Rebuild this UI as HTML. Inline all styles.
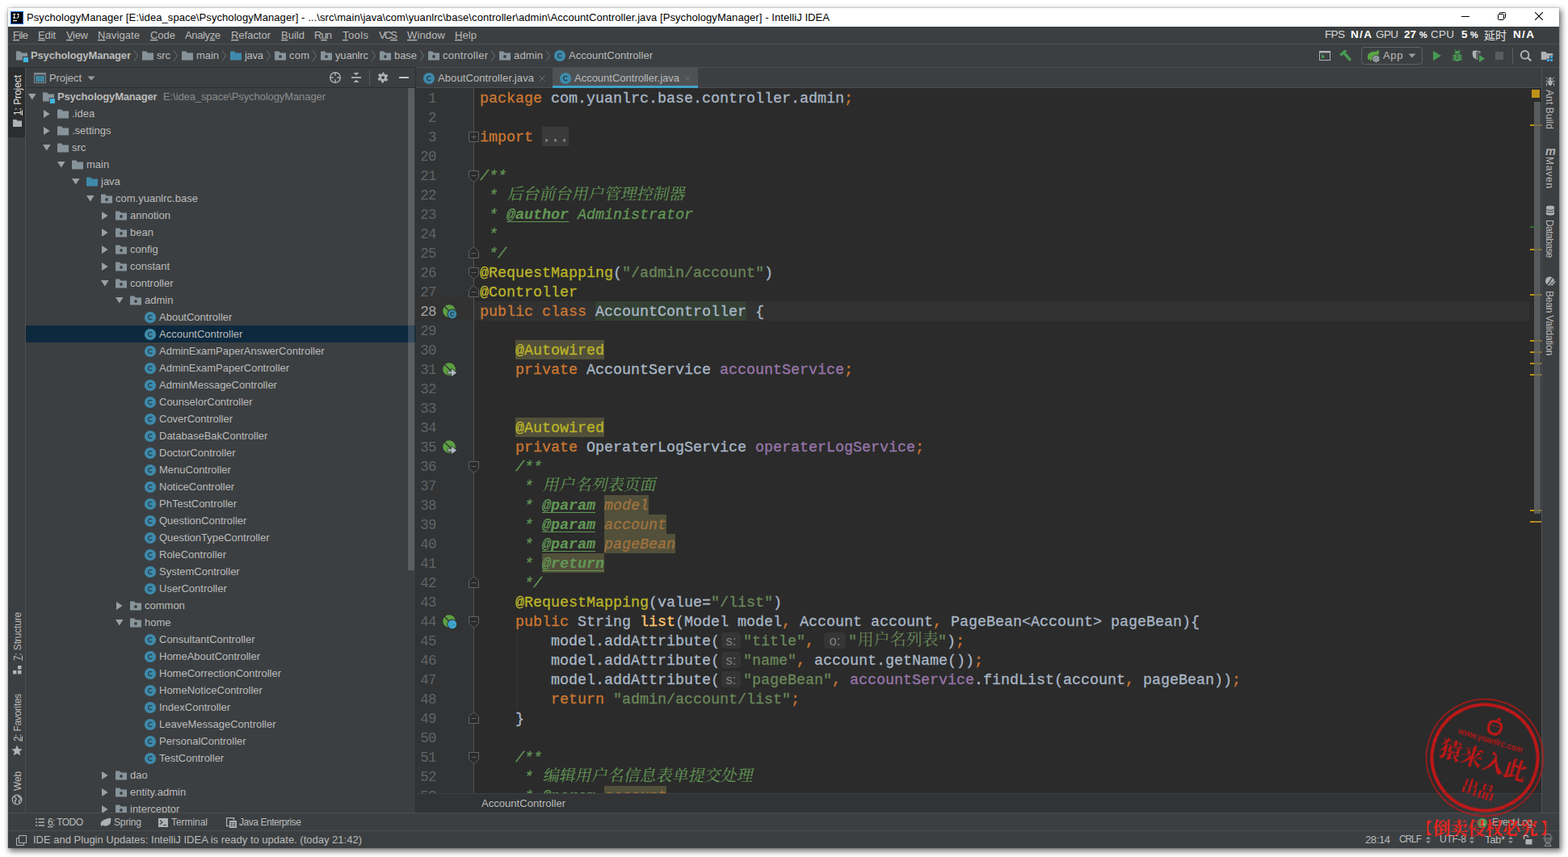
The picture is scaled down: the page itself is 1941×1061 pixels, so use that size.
<!DOCTYPE html>
<html><head><meta charset="utf-8"><title>PsychologyManager - IntelliJ IDEA</title>
<style>
html,body{margin:0;padding:0;}
body{width:1941px;height:1061px;background:#fff;position:relative;overflow:hidden;font-family:"Liberation Sans",sans-serif;}
.r{position:absolute;display:block;}
.t{position:absolute;white-space:pre;font-family:"Liberation Sans",sans-serif;}
.t u{text-decoration:underline;text-underline-offset:1px;text-decoration-skip-ink:none;}
.c{position:absolute;white-space:pre;font-family:"Liberation Mono",monospace;font-size:18.33px;line-height:28px;height:24px;color:#a9b7c6;-webkit-text-stroke:0.3px;}
.c span{display:inline-block;height:24px;line-height:28px;vertical-align:top;}
.ln{position:absolute;font-family:"Liberation Mono",monospace;font-size:17.500px;letter-spacing:-0.6px;line-height:24px;height:24px;color:#606366;text-align:right;}
.k{color:#cc7832}.s{color:#6a8759}.a{color:#bbb529}.f{color:#9876aa}.m{color:#ffc66d}
.d{color:#629755;font-style:italic}.dt{color:#629755;font-style:italic;font-weight:bold;text-decoration:underline;text-decoration-skip-ink:none;text-underline-offset:2.5px;text-decoration-thickness:1.2px;-webkit-text-stroke:0.1px}
.dp{color:#a0733f;font-style:italic;background:#52503a}
.hl{background:#344134}.ab{background:#52503a}
.c span.h{font-family:"Liberation Sans",sans-serif;font-size:16.500px;color:#7f7f7f;background:#353535;border-radius:4px;height:20px;line-height:21px;vertical-align:top;margin-top:2px;text-align:center;-webkit-text-stroke:0;}
</style></head><body>

<div class="r" style="left:10px;top:10px;width:1920px;height:1040px;background:#3c3f41;box-shadow:0 0 0 1px rgba(0,0,0,.08),2px 3px 7px 1px rgba(0,0,0,.55);"></div>
<div class="r" style="left:10px;top:10px;width:1920px;height:23px;background:#ffffff;"></div>
<svg class="r" style="left:13px;top:14px;" width="16" height="16" viewBox="0 0 16 16"><rect width="16" height="16" fill="#0a67d6"/><rect x="1" y="1" width="14" height="14" fill="#000"/><path d="M3 3.5h3.4M4.7 3.5v4.6M3 8.1h3.4M8 3.5h2.6M9.8 3.5v3.3q0 1.4-1.5 1.4h-.8" stroke="#fff" stroke-width="1.1" fill="none"/><rect x="3" y="11" width="5" height="1.2" fill="#fff"/></svg>
<svg class="r" style="left:33.3px;top:12px;overflow:visible" width="994" height="20"><text x="0" y="14.00" font-family="Liberation Sans, sans-serif" font-size="13" fill="#000000" textLength="994" lengthAdjust="spacing" xml:space="preserve">PsychologyManager [E:\idea_space\PsychologyManager] - ...\src\main\java\com\yuanlrc\base\controller\admin\AccountController.java [PsychologyManager] - IntelliJ IDEA</text></svg>
<svg class="r" style="left:1809px;top:15px;" width="10" height="10" viewBox="0 0 10 10"><path d="M0 5.500h10" stroke="#000" stroke-width="1"/></svg>
<svg class="r" style="left:1854px;top:15px;" width="10" height="10" viewBox="0 0 10 10"><rect x="0.500" y="2.500" width="7" height="7" rx="1" fill="none" stroke="#000"/><path d="M2.500 2.500v-1q0-1 1-1h5q1 0 1 1v5q0 1-1 1h-1" stroke="#000" fill="none"/></svg>
<svg class="r" style="left:1900px;top:15px;" width="10" height="10" viewBox="0 0 10 10"><path d="M0 0l10 10M10 0L0 10" stroke="#000" stroke-width="1.100"/></svg>
<div class="r" style="left:10px;top:54px;width:1920px;height:1px;background:#515151;"></div>
<svg class="r" style="left:16px;top:33px;overflow:visible" width="19" height="20"><text x="0" y="15.00" font-family="Liberation Sans, sans-serif" font-size="13" fill="#bbbbbb" textLength="19" lengthAdjust="spacing" xml:space="preserve"><tspan text-decoration="underline">F</tspan>ile</text></svg>
<svg class="r" style="left:47px;top:33px;overflow:visible" width="22" height="20"><text x="0" y="15.00" font-family="Liberation Sans, sans-serif" font-size="13" fill="#bbbbbb" textLength="22" lengthAdjust="spacing" xml:space="preserve"><tspan text-decoration="underline">E</tspan>dit</text></svg>
<svg class="r" style="left:82px;top:33px;overflow:visible" width="27" height="20"><text x="0" y="15.00" font-family="Liberation Sans, sans-serif" font-size="13" fill="#bbbbbb" textLength="27" lengthAdjust="spacing" xml:space="preserve"><tspan text-decoration="underline">V</tspan>iew</text></svg>
<svg class="r" style="left:121px;top:33px;overflow:visible" width="52" height="20"><text x="0" y="15.00" font-family="Liberation Sans, sans-serif" font-size="13" fill="#bbbbbb" textLength="52" lengthAdjust="spacing" xml:space="preserve"><tspan text-decoration="underline">N</tspan>avigate</text></svg>
<svg class="r" style="left:186px;top:33px;overflow:visible" width="31" height="20"><text x="0" y="15.00" font-family="Liberation Sans, sans-serif" font-size="13" fill="#bbbbbb" textLength="31" lengthAdjust="spacing" xml:space="preserve"><tspan text-decoration="underline">C</tspan>ode</text></svg>
<svg class="r" style="left:229px;top:33px;overflow:visible" width="44" height="20"><text x="0" y="15.00" font-family="Liberation Sans, sans-serif" font-size="13" fill="#bbbbbb" textLength="44" lengthAdjust="spacing" xml:space="preserve">Analy<tspan text-decoration="underline">z</tspan>e</text></svg>
<svg class="r" style="left:286px;top:33px;overflow:visible" width="49" height="20"><text x="0" y="15.00" font-family="Liberation Sans, sans-serif" font-size="13" fill="#bbbbbb" textLength="49" lengthAdjust="spacing" xml:space="preserve"><tspan text-decoration="underline">R</tspan>efactor</text></svg>
<svg class="r" style="left:347.5px;top:33px;overflow:visible" width="29" height="20"><text x="0" y="15.00" font-family="Liberation Sans, sans-serif" font-size="13" fill="#bbbbbb" textLength="29" lengthAdjust="spacing" xml:space="preserve"><tspan text-decoration="underline">B</tspan>uild</text></svg>
<svg class="r" style="left:388.5px;top:33px;overflow:visible" width="22" height="20"><text x="0" y="15.00" font-family="Liberation Sans, sans-serif" font-size="13" fill="#bbbbbb" textLength="22" lengthAdjust="spacing" xml:space="preserve">R<tspan text-decoration="underline">u</tspan>n</text></svg>
<svg class="r" style="left:423.5px;top:33px;overflow:visible" width="32" height="20"><text x="0" y="15.00" font-family="Liberation Sans, sans-serif" font-size="13" fill="#bbbbbb" textLength="32" lengthAdjust="spacing" xml:space="preserve"><tspan text-decoration="underline">T</tspan>ools</text></svg>
<svg class="r" style="left:468.5px;top:33px;overflow:visible" width="23" height="20"><text x="0" y="15.00" font-family="Liberation Sans, sans-serif" font-size="13" fill="#bbbbbb" textLength="23" lengthAdjust="spacing" xml:space="preserve">VC<tspan text-decoration="underline">S</tspan></text></svg>
<svg class="r" style="left:503.5px;top:33px;overflow:visible" width="47" height="20"><text x="0" y="15.00" font-family="Liberation Sans, sans-serif" font-size="13" fill="#bbbbbb" textLength="47" lengthAdjust="spacing" xml:space="preserve"><tspan text-decoration="underline">W</tspan>indow</text></svg>
<svg class="r" style="left:562.5px;top:33px;overflow:visible" width="27" height="20"><text x="0" y="15.00" font-family="Liberation Sans, sans-serif" font-size="13" fill="#bbbbbb" textLength="27" lengthAdjust="spacing" xml:space="preserve"><tspan text-decoration="underline">H</tspan>elp</text></svg>
<svg class="r" style="left:1640px;top:33px;overflow:visible" width="25" height="20"><text x="0" y="14.00" font-family="Liberation Sans, sans-serif" font-size="13.5" fill="#d8d8d8" textLength="25" lengthAdjust="spacing" xml:space="preserve">FPS</text></svg>
<svg class="r" style="left:1672px;top:33px;overflow:visible" width="26" height="20"><text x="0" y="14.00" font-family="Liberation Sans, sans-serif" font-size="13.5" font-weight="bold" fill="#ffffff" textLength="26" lengthAdjust="spacing" xml:space="preserve">N/A</text></svg>
<svg class="r" style="left:1703px;top:33px;overflow:visible" width="28" height="20"><text x="0" y="14.00" font-family="Liberation Sans, sans-serif" font-size="13.5" fill="#d8d8d8" textLength="28" lengthAdjust="spacing" xml:space="preserve">GPU</text></svg>
<svg class="r" style="left:1738px;top:33px;overflow:visible" width="15" height="20"><text x="0" y="14.00" font-family="Liberation Sans, sans-serif" font-size="13.5" font-weight="bold" fill="#ffffff" textLength="15" lengthAdjust="spacing" xml:space="preserve">27</text></svg>
<svg class="r" style="left:1757px;top:35px;overflow:visible" width="10" height="16"><text x="0" y="12.00" font-family="Liberation Sans, sans-serif" font-size="11" font-weight="bold" fill="#ffffff" textLength="10" lengthAdjust="spacing" xml:space="preserve">%</text></svg>
<svg class="r" style="left:1771px;top:33px;overflow:visible" width="29" height="20"><text x="0" y="14.00" font-family="Liberation Sans, sans-serif" font-size="13.5" fill="#d8d8d8" textLength="29" lengthAdjust="spacing" xml:space="preserve">CPU</text></svg>
<svg class="r" style="left:1809px;top:33px;overflow:visible" width="8" height="20"><text x="0" y="14.00" font-family="Liberation Sans, sans-serif" font-size="13.5" font-weight="bold" fill="#ffffff" textLength="8" lengthAdjust="spacing" xml:space="preserve">5</text></svg>
<svg class="r" style="left:1820px;top:35px;overflow:visible" width="10" height="16"><text x="0" y="12.00" font-family="Liberation Sans, sans-serif" font-size="11" font-weight="bold" fill="#ffffff" textLength="10" lengthAdjust="spacing" xml:space="preserve">%</text></svg>
<svg class="r" style="left:1837px;top:36px;fill:#e6e6e6;overflow:visible" width="30" height="16" viewBox="0 0 30 16"><text x="0" y="12.5" font-family="Liberation Sans, Noto Sans CJK SC, sans-serif" font-size="14" fill="#e6e6e6">延时</text></svg>
<svg class="r" style="left:1873px;top:33px;overflow:visible" width="26" height="20"><text x="0" y="14.00" font-family="Liberation Sans, sans-serif" font-size="13.5" font-weight="bold" fill="#ffffff" textLength="26" lengthAdjust="spacing" xml:space="preserve">N/A</text></svg>
<div class="r" style="left:10px;top:83px;width:505px;height:1px;background:#2d2f30;"></div>
<div class="r" style="left:515px;top:83px;width:1415px;height:1px;background:#4d4d4d;"></div>
<svg class="r" style="left:19px;top:60.5px;" width="16" height="16" viewBox="0 0 16 16"><path d="M1 2.5h5.2l1.600 2H15v4.500H8.800v4.500H1z" fill="#87939a"/><rect x="9.800" y="10" width="6.200" height="6" fill="#40b6e0"/></svg>
<svg class="r" style="left:38px;top:58px;overflow:visible" width="124" height="20"><text x="0" y="15.00" font-family="Liberation Sans, sans-serif" font-size="13" font-weight="bold" fill="#bbbbbb" textLength="124" lengthAdjust="spacing" xml:space="preserve">PsychologyManager</text></svg>
<svg class="r" style="left:175px;top:60.5px;" width="16" height="16" viewBox="0 0 16 16"><path d="M1 2.5h5.2l1.6 2H15v9H1z" fill="#87939a"/></svg>
<svg class="r" style="left:194px;top:58px;overflow:visible" width="17" height="20"><text x="0" y="15.00" font-family="Liberation Sans, sans-serif" font-size="13" fill="#bbbbbb" textLength="17" lengthAdjust="spacing" xml:space="preserve">src</text></svg>
<svg class="r" style="left:224px;top:60.5px;" width="16" height="16" viewBox="0 0 16 16"><path d="M1 2.5h5.2l1.6 2H15v9H1z" fill="#87939a"/></svg>
<svg class="r" style="left:243px;top:58px;overflow:visible" width="28" height="20"><text x="0" y="15.00" font-family="Liberation Sans, sans-serif" font-size="13" fill="#bbbbbb" textLength="28" lengthAdjust="spacing" xml:space="preserve">main</text></svg>
<svg class="r" style="left:284px;top:60.5px;" width="16" height="16" viewBox="0 0 16 16"><path d="M1 2.5h5.2l1.6 2H15v9H1z" fill="#3e8aab"/></svg>
<svg class="r" style="left:303px;top:58px;overflow:visible" width="23" height="20"><text x="0" y="15.00" font-family="Liberation Sans, sans-serif" font-size="13" fill="#bbbbbb" textLength="23" lengthAdjust="spacing" xml:space="preserve">java</text></svg>
<svg class="r" style="left:339px;top:60.5px;" width="16" height="16" viewBox="0 0 16 16"><path d="M1 2.5h5.2l1.6 2H15v9H1z" fill="#87939a"/><circle cx="8" cy="9" r="1.9" fill="#3c3f41"/></svg>
<svg class="r" style="left:358px;top:58px;overflow:visible" width="25" height="20"><text x="0" y="15.00" font-family="Liberation Sans, sans-serif" font-size="13" fill="#bbbbbb" textLength="25" lengthAdjust="spacing" xml:space="preserve">com</text></svg>
<svg class="r" style="left:396px;top:60.5px;" width="16" height="16" viewBox="0 0 16 16"><path d="M1 2.5h5.2l1.6 2H15v9H1z" fill="#87939a"/><circle cx="8" cy="9" r="1.9" fill="#3c3f41"/></svg>
<svg class="r" style="left:415px;top:58px;overflow:visible" width="41" height="20"><text x="0" y="15.00" font-family="Liberation Sans, sans-serif" font-size="13" fill="#bbbbbb" textLength="41" lengthAdjust="spacing" xml:space="preserve">yuanlrc</text></svg>
<svg class="r" style="left:469px;top:60.5px;" width="16" height="16" viewBox="0 0 16 16"><path d="M1 2.5h5.2l1.6 2H15v9H1z" fill="#87939a"/><circle cx="8" cy="9" r="1.9" fill="#3c3f41"/></svg>
<svg class="r" style="left:488px;top:58px;overflow:visible" width="28" height="20"><text x="0" y="15.00" font-family="Liberation Sans, sans-serif" font-size="13" fill="#bbbbbb" textLength="28" lengthAdjust="spacing" xml:space="preserve">base</text></svg>
<svg class="r" style="left:529px;top:60.5px;" width="16" height="16" viewBox="0 0 16 16"><path d="M1 2.5h5.2l1.6 2H15v9H1z" fill="#87939a"/><circle cx="8" cy="9" r="1.9" fill="#3c3f41"/></svg>
<svg class="r" style="left:548px;top:58px;overflow:visible" width="56" height="20"><text x="0" y="15.00" font-family="Liberation Sans, sans-serif" font-size="13" fill="#bbbbbb" textLength="56" lengthAdjust="spacing" xml:space="preserve">controller</text></svg>
<svg class="r" style="left:617px;top:60.5px;" width="16" height="16" viewBox="0 0 16 16"><path d="M1 2.5h5.2l1.6 2H15v9H1z" fill="#87939a"/><circle cx="8" cy="9" r="1.9" fill="#3c3f41"/></svg>
<svg class="r" style="left:636px;top:58px;overflow:visible" width="36" height="20"><text x="0" y="15.00" font-family="Liberation Sans, sans-serif" font-size="13" fill="#bbbbbb" textLength="36" lengthAdjust="spacing" xml:space="preserve">admin</text></svg>
<svg class="r" style="left:685px;top:60.5px;" width="16" height="16" viewBox="0 0 16 16"><circle cx="8" cy="8" r="7.100" fill="#3e8aab"/><path d="M10.200 9.700a2.600 2.600 0 1 1 0-3.400" fill="none" stroke="#25424f" stroke-width="1.400"/></svg>
<svg class="r" style="left:704px;top:58px;overflow:visible" width="104" height="20"><text x="0" y="15.00" font-family="Liberation Sans, sans-serif" font-size="13" fill="#bbbbbb" textLength="104" lengthAdjust="spacing" xml:space="preserve">AccountController</text></svg>
<svg class="r" style="left:165px;top:61px;" width="7" height="16" viewBox="0 0 7 16"><path d="M1 1.5l4.5 6.5L1 14.5" stroke="#6e7173" stroke-width="1" fill="none"/></svg>
<svg class="r" style="left:214px;top:61px;" width="7" height="16" viewBox="0 0 7 16"><path d="M1 1.5l4.5 6.5L1 14.5" stroke="#6e7173" stroke-width="1" fill="none"/></svg>
<svg class="r" style="left:274px;top:61px;" width="7" height="16" viewBox="0 0 7 16"><path d="M1 1.5l4.5 6.5L1 14.5" stroke="#6e7173" stroke-width="1" fill="none"/></svg>
<svg class="r" style="left:329px;top:61px;" width="7" height="16" viewBox="0 0 7 16"><path d="M1 1.5l4.5 6.5L1 14.5" stroke="#6e7173" stroke-width="1" fill="none"/></svg>
<svg class="r" style="left:386px;top:61px;" width="7" height="16" viewBox="0 0 7 16"><path d="M1 1.5l4.5 6.5L1 14.5" stroke="#6e7173" stroke-width="1" fill="none"/></svg>
<svg class="r" style="left:459px;top:61px;" width="7" height="16" viewBox="0 0 7 16"><path d="M1 1.5l4.5 6.5L1 14.5" stroke="#6e7173" stroke-width="1" fill="none"/></svg>
<svg class="r" style="left:519px;top:61px;" width="7" height="16" viewBox="0 0 7 16"><path d="M1 1.5l4.5 6.5L1 14.5" stroke="#6e7173" stroke-width="1" fill="none"/></svg>
<svg class="r" style="left:607px;top:61px;" width="7" height="16" viewBox="0 0 7 16"><path d="M1 1.5l4.5 6.5L1 14.5" stroke="#6e7173" stroke-width="1" fill="none"/></svg>
<svg class="r" style="left:675px;top:61px;" width="7" height="16" viewBox="0 0 7 16"><path d="M1 1.5l4.5 6.5L1 14.5" stroke="#6e7173" stroke-width="1" fill="none"/></svg>
<svg class="r" style="left:1633px;top:63px;" width="14" height="12" viewBox="0 0 14 12"><rect x="0.500" y="0.500" width="13" height="11" fill="none" stroke="#afb1b3" stroke-width="1"/><rect x="0" y="0" width="14" height="2.400" fill="#afb1b3"/><path d="M3 4.100l4.200 2.800L3 9.700z" fill="#499c54"/></svg>
<svg class="r" style="left:1657px;top:61px;" width="17" height="16" viewBox="0 0 17 16"><path d="M1 6.400L6.800 1l3 .3.200 1.100L3.800 8.400z" fill="#499c54"/><path d="M5.600 5.700l3-1.700L16 12.400l-2.500 2.500z" fill="#499c54"/></svg>
<div class="r" style="left:1685px;top:58px;width:74px;height:20px;border:1px solid #5f6264;border-radius:4px;"></div>
<svg class="r" style="left:1692px;top:61px;" width="18" height="18" viewBox="0 0 18 18"><path d="M14.900 .8C15.600 6 14 11 9 12.300 5.500 13.200 3 12.500 2 13.200 0 10 .5 5.500 5 3.800 8.500 2.500 12.500 3.300 14.900 .8z" fill="#5aa545"/><circle cx="4.800" cy="13.700" r=".9" fill="#5aa545"/><path d="M11.400 6.600l4.600 2.650v5.300l-4.600 2.650-4.600-2.650v-5.300z" fill="#3c3f41"/><path d="M11.400 7.500l3.900 2.200v4.400l-3.900 2.200-3.900-2.200V9.700z" fill="#b0bac3"/><path d="M11.400 9v2.900" stroke="#474b4f" stroke-width=".9"/><path d="M10 9.900a2.300 2.300 0 1 0 2.800 0" stroke="#474b4f" stroke-width=".9" fill="none"/></svg>
<svg class="r" style="left:1712px;top:58px;overflow:visible" width="24.5" height="20"><text x="0" y="15.00" font-family="Liberation Sans, sans-serif" font-size="13" fill="#bbbbbb" textLength="24.5" lengthAdjust="spacing" xml:space="preserve">App</text></svg>
<svg class="r" style="left:1743px;top:66px;" width="10" height="6" viewBox="0 0 10 6"><path d="M0.500 0.500h9L5 5.500z" fill="#9a9da0"/></svg>
<svg class="r" style="left:1773px;top:62px;" width="12" height="14" viewBox="0 0 12 14"><path d="M1 1l10 6L1 13z" fill="#499c54"/></svg>
<svg class="r" style="left:1797px;top:61px;" width="14" height="16" viewBox="0 0 14 16"><path d="M3.300 .9l.9-.7 1.700 2.100q1.100-.5 2.200 0L9.800.2l.9.700-1.600 2.100q1.300.9 1.500 2.300H3.400q.2-1.400 1.500-2.300zM3.200 6.300h7.600v1.300H13v1.300h-2.200v1.300H13v1.300h-2.200v.6l2.200.9-.5 1.200-2.100-.9Q9.500 15 7 15t-3.400-1.700l-2.100.9-.5-1.200 2.200-.9v-.6H1v-1.300h2.200V8.900H1V7.600h2.200z" fill="#499c54"/><path d="M5 8.300h4M5 11.100h4" stroke="#3c3f41" stroke-width="1.100"/></svg>
<svg class="r" style="left:1822px;top:62px;" width="17" height="16" viewBox="0 0 17 16"><path d="M.7 1.700Q3.500 .3 5.800 .7l4.700 1v2.600H7.300v8.200Q5 11 2 9.500 .5 6 .7 1.700z" fill="#afb1b3"/><path d="M5.400 2.300h2.400l2 .6v.9H6.600v7.900l-1.200-.6z" fill="#3c3f41"/><path d="M9 6.100l7.200 4.500L9 15.100z" fill="#499c54" stroke="#3c3f41" stroke-width=".8" paint-order="stroke"/></svg>
<div class="r" style="left:1851px;top:64px;width:10px;height:10px;background:#5a5c5e;"></div>
<div class="r" style="left:1872px;top:59px;width:1px;height:20px;background:#5a5d5f;"></div>
<svg class="r" style="left:1880px;top:60px;" width="18" height="18" viewBox="0 0 18 18"><circle cx="7.600" cy="7.900" r="4.800" fill="none" stroke="#afb1b3" stroke-width="2"/><path d="M11 11.400l4.400 3.900" stroke="#afb1b3" stroke-width="2.300"/></svg>
<svg class="r" style="left:1907px;top:63px;" width="16" height="14" viewBox="0 0 16 14"><path d="M.8 .9h5.800l1.300 2h7.300v4.200H11v4H.8z" fill="#afb1b3"/><rect x="11.500" y="5.700" width="4" height="4" fill="#3c3f41"/><rect x="7.400" y="9.600" width="8.100" height="4.100" fill="#3c3f41"/><rect x="12" y="6.200" width="3" height="2.800" fill="#3ca5e0"/><rect x="7.900" y="10.100" width="3.100" height="2.900" fill="#3ca5e0"/><rect x="12" y="10.100" width="3" height="2.900" fill="#3ca5e0"/></svg>
<div class="r" style="left:10px;top:84px;width:21px;height:923px;background:#3c3f41;"></div>
<div class="r" style="left:31px;top:84px;width:1px;height:923px;background:#4d4f51;"></div>
<div class="r" style="left:10px;top:84px;width:21px;height:86px;background:#2b2d2e;"></div>
<span class="t" style="left:13.5px;top:143px;font-size:12px;line-height:16px;height:16px;color:#e4e4e4;letter-spacing:-0.069px;transform-origin:0 0;transform:rotate(-90deg);"><u>1</u>: Project</span>
<svg class="r" style="left:16px;top:148px;" width="11" height="9" viewBox="0 0 11 9"><path d="M0 0h4.300l1.300 1.600H11V9H0z" fill="#afb1b3"/></svg>
<span class="t" style="left:13.5px;top:818px;font-size:12px;line-height:16px;height:16px;color:#bbbbbb;letter-spacing:-0.169px;transform-origin:0 0;transform:rotate(-90deg);"><u>7</u>: Structure</span>
<svg class="r" style="left:16px;top:824px;" width="11" height="11" viewBox="0 0 11 11"><rect x="0" y="6" width="4.500" height="4.500" fill="#afb1b3"/><rect x="6" y="6" width="4.500" height="4.500" fill="#afb1b3"/><rect x="6" y="0" width="4.500" height="4.500" fill="#afb1b3"/></svg>
<span class="t" style="left:13.5px;top:918px;font-size:12px;line-height:16px;height:16px;color:#bbbbbb;letter-spacing:-0.307px;transform-origin:0 0;transform:rotate(-90deg);"><u>2</u>: Favorites</span>
<svg class="r" style="left:14px;top:922px;" width="14" height="14" viewBox="0 0 14 14"><path d="M7 0.500l2 4.500 4.700.4-3.600 3.100 1.100 4.700L7 10.700 2.800 13.200l1.100-4.700L0.300 5.400 5 5z" fill="#afb1b3"/></svg>
<span class="t" style="left:13.5px;top:979px;font-size:12px;line-height:16px;height:16px;color:#bbbbbb;letter-spacing:-0.152px;transform-origin:0 0;transform:rotate(-90deg);">Web</span>
<svg class="r" style="left:14px;top:983px;" width="14" height="14" viewBox="0 0 14 14"><circle cx="7" cy="7" r="5.800" fill="none" stroke="#afb1b3" stroke-width="1.300"/><path d="M3 3.500q2.500 0 3 2t-1.500 2.500q0 2 1 3.500M8.500 1.500q-.5 2 1.500 2.500t2.500 3q-2.500-.5-3 1.500t1 3" fill="none" stroke="#afb1b3" stroke-width="1.400"/></svg>
<div class="r" style="left:32px;top:108px;width:482px;height:1px;background:#2d2f30;"></div>
<div class="r" style="left:514px;top:83px;width:1px;height:924px;background:#2d2f30;"></div>
<svg class="r" style="left:42px;top:90px;" width="15" height="13" viewBox="0 0 15 13"><rect x="0.500" y="0.500" width="14" height="12" fill="none" stroke="#7f8b91" stroke-width="1"/><rect x="0" y="0" width="15" height="2.500" fill="#7f8b91"/><rect x="2" y="3.800" width="11" height="7.400" fill="#3e86a0"/></svg>
<svg class="r" style="left:61px;top:86px;overflow:visible" width="40" height="20"><text x="0" y="15.00" font-family="Liberation Sans, sans-serif" font-size="13" fill="#bbbbbb" textLength="40" lengthAdjust="spacing" xml:space="preserve">Project</text></svg>
<svg class="r" style="left:108px;top:94px;" width="10" height="6" viewBox="0 0 10 6"><path d="M0.500 0.500h9L5 5.500z" fill="#9a9da0"/></svg>
<svg class="r" style="left:407px;top:88px;" width="16" height="16" viewBox="0 0 16 16"><circle cx="8" cy="8" r="6.300" fill="none" stroke="#afb1b3" stroke-width="1.400"/><path d="M8 1.500v4.200M8 10.300v4.200M1.500 8h4.200M10.300 8h4.200" stroke="#afb1b3" stroke-width="1.400"/></svg>
<svg class="r" style="left:434px;top:88px;" width="14" height="16" viewBox="0 0 14 16"><path d="M1 8h12" stroke="#afb1b3" stroke-width="1.800"/><path d="M3.500 2h7L7 5.300zM3.500 14h7L7 10.700z" fill="#afb1b3"/></svg>
<div class="r" style="left:457px;top:86px;width:1px;height:20px;background:#555759;"></div>
<svg class="r" style="left:467px;top:89px;" width="14" height="14" viewBox="0 0 14 14"><circle cx="7" cy="7" r="3.400" fill="none" stroke="#afb1b3" stroke-width="2.800"/><circle cx="7" cy="7" r="5.300" fill="none" stroke="#afb1b3" stroke-width="2.400" stroke-dasharray="2.900 2.650" stroke-dashoffset="1.450" transform="rotate(-90 7 7)"/></svg>
<div class="r" style="left:494px;top:95px;width:12px;height:2px;background:#c4c5c6;"></div>
<div class="r" style="left:32px;top:109px;width:482px;height:897px;overflow:hidden;">
<svg class="r" style="left:2.5px;top:7px;" width="10" height="8" viewBox="0 0 10 8"><path d="M0 0h9.600L4.800 7.600z" fill="#9da0a2"/></svg>
<svg class="r" style="left:20px;top:2.5px;" width="16" height="16" viewBox="0 0 16 16"><path d="M1 2.5h5.2l1.600 2H15v4.500H8.800v4.500H1z" fill="#87939a"/><rect x="9.800" y="10" width="6.200" height="6" fill="#40b6e0"/></svg>
<svg class="r" style="left:39px;top:0px;overflow:visible" width="123.5" height="20"><text x="0" y="15.00" font-family="Liberation Sans, sans-serif" font-size="13" font-weight="bold" fill="#bbbbbb" textLength="123.5" lengthAdjust="spacing" xml:space="preserve">PsychologyManager</text></svg>
<svg class="r" style="left:170px;top:0px;overflow:visible" width="201" height="20"><text x="0" y="15.00" font-family="Liberation Sans, sans-serif" font-size="13" fill="#8c8c8c" textLength="201" lengthAdjust="spacing" xml:space="preserve">E:\idea_space\PsychologyManager</text></svg>
<svg class="r" style="left:22px;top:26.5px;" width="8" height="10" viewBox="0 0 8 10"><path d="M0 0L7.600 5 0 10z" fill="#9da0a2"/></svg>
<svg class="r" style="left:38px;top:23.5px;" width="16" height="16" viewBox="0 0 16 16"><path d="M1 2.5h5.2l1.6 2H15v9H1z" fill="#87939a"/></svg>
<span class="t" style="left:57px;top:22.5px;font-size:13px;line-height:18px;color:#bbbbbb;">.idea</span>
<svg class="r" style="left:22px;top:47.5px;" width="8" height="10" viewBox="0 0 8 10"><path d="M0 0L7.600 5 0 10z" fill="#9da0a2"/></svg>
<svg class="r" style="left:38px;top:44.5px;" width="16" height="16" viewBox="0 0 16 16"><path d="M1 2.5h5.2l1.6 2H15v9H1z" fill="#87939a"/></svg>
<span class="t" style="left:57px;top:43.5px;font-size:13px;line-height:18px;color:#bbbbbb;">.settings</span>
<svg class="r" style="left:20.5px;top:70px;" width="10" height="8" viewBox="0 0 10 8"><path d="M0 0h9.600L4.800 7.600z" fill="#9da0a2"/></svg>
<svg class="r" style="left:38px;top:65.5px;" width="16" height="16" viewBox="0 0 16 16"><path d="M1 2.5h5.2l1.6 2H15v9H1z" fill="#87939a"/></svg>
<span class="t" style="left:57px;top:64.5px;font-size:13px;line-height:18px;color:#bbbbbb;">src</span>
<svg class="r" style="left:38.5px;top:91px;" width="10" height="8" viewBox="0 0 10 8"><path d="M0 0h9.600L4.800 7.600z" fill="#9da0a2"/></svg>
<svg class="r" style="left:56px;top:86.5px;" width="16" height="16" viewBox="0 0 16 16"><path d="M1 2.5h5.2l1.6 2H15v9H1z" fill="#87939a"/></svg>
<span class="t" style="left:75px;top:85.5px;font-size:13px;line-height:18px;color:#bbbbbb;">main</span>
<svg class="r" style="left:56.5px;top:112px;" width="10" height="8" viewBox="0 0 10 8"><path d="M0 0h9.600L4.800 7.600z" fill="#9da0a2"/></svg>
<svg class="r" style="left:74px;top:107.5px;" width="16" height="16" viewBox="0 0 16 16"><path d="M1 2.5h5.2l1.6 2H15v9H1z" fill="#3e8aab"/></svg>
<span class="t" style="left:93px;top:106.5px;font-size:13px;line-height:18px;color:#bbbbbb;">java</span>
<svg class="r" style="left:74.5px;top:133px;" width="10" height="8" viewBox="0 0 10 8"><path d="M0 0h9.600L4.800 7.600z" fill="#9da0a2"/></svg>
<svg class="r" style="left:92px;top:128.5px;" width="16" height="16" viewBox="0 0 16 16"><path d="M1 2.5h5.2l1.6 2H15v9H1z" fill="#87939a"/><circle cx="8" cy="9" r="1.9" fill="#3c3f41"/></svg>
<span class="t" style="left:111px;top:127.5px;font-size:13px;line-height:18px;color:#bbbbbb;">com.yuanlrc.base</span>
<svg class="r" style="left:94px;top:152.5px;" width="8" height="10" viewBox="0 0 8 10"><path d="M0 0L7.600 5 0 10z" fill="#9da0a2"/></svg>
<svg class="r" style="left:110px;top:149.5px;" width="16" height="16" viewBox="0 0 16 16"><path d="M1 2.5h5.2l1.6 2H15v9H1z" fill="#87939a"/><circle cx="8" cy="9" r="1.9" fill="#3c3f41"/></svg>
<span class="t" style="left:129px;top:148.5px;font-size:13px;line-height:18px;color:#bbbbbb;">annotion</span>
<svg class="r" style="left:94px;top:173.5px;" width="8" height="10" viewBox="0 0 8 10"><path d="M0 0L7.600 5 0 10z" fill="#9da0a2"/></svg>
<svg class="r" style="left:110px;top:170.5px;" width="16" height="16" viewBox="0 0 16 16"><path d="M1 2.5h5.2l1.6 2H15v9H1z" fill="#87939a"/><circle cx="8" cy="9" r="1.9" fill="#3c3f41"/></svg>
<span class="t" style="left:129px;top:169.5px;font-size:13px;line-height:18px;color:#bbbbbb;">bean</span>
<svg class="r" style="left:94px;top:194.5px;" width="8" height="10" viewBox="0 0 8 10"><path d="M0 0L7.600 5 0 10z" fill="#9da0a2"/></svg>
<svg class="r" style="left:110px;top:191.5px;" width="16" height="16" viewBox="0 0 16 16"><path d="M1 2.5h5.2l1.6 2H15v9H1z" fill="#87939a"/><circle cx="8" cy="9" r="1.9" fill="#3c3f41"/></svg>
<span class="t" style="left:129px;top:190.5px;font-size:13px;line-height:18px;color:#bbbbbb;">config</span>
<svg class="r" style="left:94px;top:215.5px;" width="8" height="10" viewBox="0 0 8 10"><path d="M0 0L7.600 5 0 10z" fill="#9da0a2"/></svg>
<svg class="r" style="left:110px;top:212.5px;" width="16" height="16" viewBox="0 0 16 16"><path d="M1 2.5h5.2l1.6 2H15v9H1z" fill="#87939a"/><circle cx="8" cy="9" r="1.9" fill="#3c3f41"/></svg>
<span class="t" style="left:129px;top:211.5px;font-size:13px;line-height:18px;color:#bbbbbb;">constant</span>
<svg class="r" style="left:92.5px;top:238px;" width="10" height="8" viewBox="0 0 10 8"><path d="M0 0h9.600L4.800 7.600z" fill="#9da0a2"/></svg>
<svg class="r" style="left:110px;top:233.5px;" width="16" height="16" viewBox="0 0 16 16"><path d="M1 2.5h5.2l1.6 2H15v9H1z" fill="#87939a"/><circle cx="8" cy="9" r="1.9" fill="#3c3f41"/></svg>
<span class="t" style="left:129px;top:232.5px;font-size:13px;line-height:18px;color:#bbbbbb;">controller</span>
<svg class="r" style="left:110.5px;top:259px;" width="10" height="8" viewBox="0 0 10 8"><path d="M0 0h9.600L4.800 7.600z" fill="#9da0a2"/></svg>
<svg class="r" style="left:128px;top:254.5px;" width="16" height="16" viewBox="0 0 16 16"><path d="M1 2.5h5.2l1.6 2H15v9H1z" fill="#87939a"/><circle cx="8" cy="9" r="1.9" fill="#3c3f41"/></svg>
<span class="t" style="left:147px;top:253.5px;font-size:13px;line-height:18px;color:#bbbbbb;">admin</span>
<svg class="r" style="left:146px;top:275.5px;" width="16" height="16" viewBox="0 0 16 16"><circle cx="8" cy="8" r="7.100" fill="#3e8aab"/><path d="M10.200 9.700a2.600 2.600 0 1 1 0-3.400" fill="none" stroke="#25424f" stroke-width="1.400"/></svg>
<span class="t" style="left:165px;top:274.5px;font-size:13px;line-height:18px;color:#bbbbbb;">AboutController</span>
<div class="r" style="left:0;top:294px;width:482px;height:21px;background:#0d293e;"></div>
<svg class="r" style="left:146px;top:296.5px;" width="16" height="16" viewBox="0 0 16 16"><circle cx="8" cy="8" r="7.100" fill="#3e8aab"/><path d="M10.200 9.700a2.600 2.600 0 1 1 0-3.400" fill="none" stroke="#25424f" stroke-width="1.400"/></svg>
<span class="t" style="left:165px;top:295.5px;font-size:13px;line-height:18px;color:#bbbbbb;">AccountController</span>
<svg class="r" style="left:146px;top:317.5px;" width="16" height="16" viewBox="0 0 16 16"><circle cx="8" cy="8" r="7.100" fill="#3e8aab"/><path d="M10.200 9.700a2.600 2.600 0 1 1 0-3.400" fill="none" stroke="#25424f" stroke-width="1.400"/></svg>
<span class="t" style="left:165px;top:316.5px;font-size:13px;line-height:18px;color:#bbbbbb;">AdminExamPaperAnswerController</span>
<svg class="r" style="left:146px;top:338.5px;" width="16" height="16" viewBox="0 0 16 16"><circle cx="8" cy="8" r="7.100" fill="#3e8aab"/><path d="M10.200 9.700a2.600 2.600 0 1 1 0-3.400" fill="none" stroke="#25424f" stroke-width="1.400"/></svg>
<span class="t" style="left:165px;top:337.5px;font-size:13px;line-height:18px;color:#bbbbbb;">AdminExamPaperController</span>
<svg class="r" style="left:146px;top:359.5px;" width="16" height="16" viewBox="0 0 16 16"><circle cx="8" cy="8" r="7.100" fill="#3e8aab"/><path d="M10.200 9.700a2.600 2.600 0 1 1 0-3.400" fill="none" stroke="#25424f" stroke-width="1.400"/></svg>
<span class="t" style="left:165px;top:358.5px;font-size:13px;line-height:18px;color:#bbbbbb;">AdminMessageController</span>
<svg class="r" style="left:146px;top:380.5px;" width="16" height="16" viewBox="0 0 16 16"><circle cx="8" cy="8" r="7.100" fill="#3e8aab"/><path d="M10.200 9.700a2.600 2.600 0 1 1 0-3.400" fill="none" stroke="#25424f" stroke-width="1.400"/></svg>
<span class="t" style="left:165px;top:379.5px;font-size:13px;line-height:18px;color:#bbbbbb;">CounselorController</span>
<svg class="r" style="left:146px;top:401.5px;" width="16" height="16" viewBox="0 0 16 16"><circle cx="8" cy="8" r="7.100" fill="#3e8aab"/><path d="M10.200 9.700a2.600 2.600 0 1 1 0-3.400" fill="none" stroke="#25424f" stroke-width="1.400"/></svg>
<span class="t" style="left:165px;top:400.5px;font-size:13px;line-height:18px;color:#bbbbbb;">CoverController</span>
<svg class="r" style="left:146px;top:422.5px;" width="16" height="16" viewBox="0 0 16 16"><circle cx="8" cy="8" r="7.100" fill="#3e8aab"/><path d="M10.200 9.700a2.600 2.600 0 1 1 0-3.400" fill="none" stroke="#25424f" stroke-width="1.400"/></svg>
<span class="t" style="left:165px;top:421.5px;font-size:13px;line-height:18px;color:#bbbbbb;">DatabaseBakController</span>
<svg class="r" style="left:146px;top:443.5px;" width="16" height="16" viewBox="0 0 16 16"><circle cx="8" cy="8" r="7.100" fill="#3e8aab"/><path d="M10.200 9.700a2.600 2.600 0 1 1 0-3.400" fill="none" stroke="#25424f" stroke-width="1.400"/></svg>
<span class="t" style="left:165px;top:442.5px;font-size:13px;line-height:18px;color:#bbbbbb;">DoctorController</span>
<svg class="r" style="left:146px;top:464.5px;" width="16" height="16" viewBox="0 0 16 16"><circle cx="8" cy="8" r="7.100" fill="#3e8aab"/><path d="M10.200 9.700a2.600 2.600 0 1 1 0-3.400" fill="none" stroke="#25424f" stroke-width="1.400"/></svg>
<span class="t" style="left:165px;top:463.5px;font-size:13px;line-height:18px;color:#bbbbbb;">MenuController</span>
<svg class="r" style="left:146px;top:485.5px;" width="16" height="16" viewBox="0 0 16 16"><circle cx="8" cy="8" r="7.100" fill="#3e8aab"/><path d="M10.200 9.700a2.600 2.600 0 1 1 0-3.400" fill="none" stroke="#25424f" stroke-width="1.400"/></svg>
<span class="t" style="left:165px;top:484.5px;font-size:13px;line-height:18px;color:#bbbbbb;">NoticeController</span>
<svg class="r" style="left:146px;top:506.5px;" width="16" height="16" viewBox="0 0 16 16"><circle cx="8" cy="8" r="7.100" fill="#3e8aab"/><path d="M10.200 9.700a2.600 2.600 0 1 1 0-3.400" fill="none" stroke="#25424f" stroke-width="1.400"/></svg>
<span class="t" style="left:165px;top:505.5px;font-size:13px;line-height:18px;color:#bbbbbb;">PhTestController</span>
<svg class="r" style="left:146px;top:527.5px;" width="16" height="16" viewBox="0 0 16 16"><circle cx="8" cy="8" r="7.100" fill="#3e8aab"/><path d="M10.200 9.700a2.600 2.600 0 1 1 0-3.400" fill="none" stroke="#25424f" stroke-width="1.400"/></svg>
<span class="t" style="left:165px;top:526.5px;font-size:13px;line-height:18px;color:#bbbbbb;">QuestionController</span>
<svg class="r" style="left:146px;top:548.5px;" width="16" height="16" viewBox="0 0 16 16"><circle cx="8" cy="8" r="7.100" fill="#3e8aab"/><path d="M10.200 9.700a2.600 2.600 0 1 1 0-3.400" fill="none" stroke="#25424f" stroke-width="1.400"/></svg>
<span class="t" style="left:165px;top:547.5px;font-size:13px;line-height:18px;color:#bbbbbb;">QuestionTypeController</span>
<svg class="r" style="left:146px;top:569.5px;" width="16" height="16" viewBox="0 0 16 16"><circle cx="8" cy="8" r="7.100" fill="#3e8aab"/><path d="M10.200 9.700a2.600 2.600 0 1 1 0-3.400" fill="none" stroke="#25424f" stroke-width="1.400"/></svg>
<span class="t" style="left:165px;top:568.5px;font-size:13px;line-height:18px;color:#bbbbbb;">RoleController</span>
<svg class="r" style="left:146px;top:590.5px;" width="16" height="16" viewBox="0 0 16 16"><circle cx="8" cy="8" r="7.100" fill="#3e8aab"/><path d="M10.200 9.700a2.600 2.600 0 1 1 0-3.400" fill="none" stroke="#25424f" stroke-width="1.400"/></svg>
<span class="t" style="left:165px;top:589.5px;font-size:13px;line-height:18px;color:#bbbbbb;">SystemController</span>
<svg class="r" style="left:146px;top:611.5px;" width="16" height="16" viewBox="0 0 16 16"><circle cx="8" cy="8" r="7.100" fill="#3e8aab"/><path d="M10.200 9.700a2.600 2.600 0 1 1 0-3.400" fill="none" stroke="#25424f" stroke-width="1.400"/></svg>
<span class="t" style="left:165px;top:610.5px;font-size:13px;line-height:18px;color:#bbbbbb;">UserController</span>
<svg class="r" style="left:112px;top:635.5px;" width="8" height="10" viewBox="0 0 8 10"><path d="M0 0L7.600 5 0 10z" fill="#9da0a2"/></svg>
<svg class="r" style="left:128px;top:632.5px;" width="16" height="16" viewBox="0 0 16 16"><path d="M1 2.5h5.2l1.6 2H15v9H1z" fill="#87939a"/><circle cx="8" cy="9" r="1.9" fill="#3c3f41"/></svg>
<span class="t" style="left:147px;top:631.5px;font-size:13px;line-height:18px;color:#bbbbbb;">common</span>
<svg class="r" style="left:110.5px;top:658px;" width="10" height="8" viewBox="0 0 10 8"><path d="M0 0h9.600L4.800 7.600z" fill="#9da0a2"/></svg>
<svg class="r" style="left:128px;top:653.5px;" width="16" height="16" viewBox="0 0 16 16"><path d="M1 2.5h5.2l1.6 2H15v9H1z" fill="#87939a"/><circle cx="8" cy="9" r="1.9" fill="#3c3f41"/></svg>
<span class="t" style="left:147px;top:652.5px;font-size:13px;line-height:18px;color:#bbbbbb;">home</span>
<svg class="r" style="left:146px;top:674.5px;" width="16" height="16" viewBox="0 0 16 16"><circle cx="8" cy="8" r="7.100" fill="#3e8aab"/><path d="M10.200 9.700a2.600 2.600 0 1 1 0-3.400" fill="none" stroke="#25424f" stroke-width="1.400"/></svg>
<span class="t" style="left:165px;top:673.5px;font-size:13px;line-height:18px;color:#bbbbbb;">ConsultantController</span>
<svg class="r" style="left:146px;top:695.5px;" width="16" height="16" viewBox="0 0 16 16"><circle cx="8" cy="8" r="7.100" fill="#3e8aab"/><path d="M10.200 9.700a2.600 2.600 0 1 1 0-3.400" fill="none" stroke="#25424f" stroke-width="1.400"/></svg>
<span class="t" style="left:165px;top:694.5px;font-size:13px;line-height:18px;color:#bbbbbb;">HomeAboutController</span>
<svg class="r" style="left:146px;top:716.5px;" width="16" height="16" viewBox="0 0 16 16"><circle cx="8" cy="8" r="7.100" fill="#3e8aab"/><path d="M10.200 9.700a2.600 2.600 0 1 1 0-3.400" fill="none" stroke="#25424f" stroke-width="1.400"/></svg>
<span class="t" style="left:165px;top:715.5px;font-size:13px;line-height:18px;color:#bbbbbb;">HomeCorrectionController</span>
<svg class="r" style="left:146px;top:737.5px;" width="16" height="16" viewBox="0 0 16 16"><circle cx="8" cy="8" r="7.100" fill="#3e8aab"/><path d="M10.200 9.700a2.600 2.600 0 1 1 0-3.400" fill="none" stroke="#25424f" stroke-width="1.400"/></svg>
<span class="t" style="left:165px;top:736.5px;font-size:13px;line-height:18px;color:#bbbbbb;">HomeNoticeController</span>
<svg class="r" style="left:146px;top:758.5px;" width="16" height="16" viewBox="0 0 16 16"><circle cx="8" cy="8" r="7.100" fill="#3e8aab"/><path d="M10.200 9.700a2.600 2.600 0 1 1 0-3.400" fill="none" stroke="#25424f" stroke-width="1.400"/></svg>
<span class="t" style="left:165px;top:757.5px;font-size:13px;line-height:18px;color:#bbbbbb;">IndexController</span>
<svg class="r" style="left:146px;top:779.5px;" width="16" height="16" viewBox="0 0 16 16"><circle cx="8" cy="8" r="7.100" fill="#3e8aab"/><path d="M10.200 9.700a2.600 2.600 0 1 1 0-3.400" fill="none" stroke="#25424f" stroke-width="1.400"/></svg>
<span class="t" style="left:165px;top:778.5px;font-size:13px;line-height:18px;color:#bbbbbb;">LeaveMessageController</span>
<svg class="r" style="left:146px;top:800.5px;" width="16" height="16" viewBox="0 0 16 16"><circle cx="8" cy="8" r="7.100" fill="#3e8aab"/><path d="M10.200 9.700a2.600 2.600 0 1 1 0-3.400" fill="none" stroke="#25424f" stroke-width="1.400"/></svg>
<span class="t" style="left:165px;top:799.5px;font-size:13px;line-height:18px;color:#bbbbbb;">PersonalController</span>
<svg class="r" style="left:146px;top:821.5px;" width="16" height="16" viewBox="0 0 16 16"><circle cx="8" cy="8" r="7.100" fill="#3e8aab"/><path d="M10.200 9.700a2.600 2.600 0 1 1 0-3.400" fill="none" stroke="#25424f" stroke-width="1.400"/></svg>
<span class="t" style="left:165px;top:820.5px;font-size:13px;line-height:18px;color:#bbbbbb;">TestController</span>
<svg class="r" style="left:94px;top:845.5px;" width="8" height="10" viewBox="0 0 8 10"><path d="M0 0L7.600 5 0 10z" fill="#9da0a2"/></svg>
<svg class="r" style="left:110px;top:842.5px;" width="16" height="16" viewBox="0 0 16 16"><path d="M1 2.5h5.2l1.6 2H15v9H1z" fill="#87939a"/><circle cx="8" cy="9" r="1.9" fill="#3c3f41"/></svg>
<span class="t" style="left:129px;top:841.5px;font-size:13px;line-height:18px;color:#bbbbbb;">dao</span>
<svg class="r" style="left:94px;top:866.5px;" width="8" height="10" viewBox="0 0 8 10"><path d="M0 0L7.600 5 0 10z" fill="#9da0a2"/></svg>
<svg class="r" style="left:110px;top:863.5px;" width="16" height="16" viewBox="0 0 16 16"><path d="M1 2.5h5.2l1.6 2H15v9H1z" fill="#87939a"/><circle cx="8" cy="9" r="1.9" fill="#3c3f41"/></svg>
<span class="t" style="left:129px;top:862.5px;font-size:13px;line-height:18px;color:#bbbbbb;">entity.admin</span>
<svg class="r" style="left:94px;top:887.5px;" width="8" height="10" viewBox="0 0 8 10"><path d="M0 0L7.600 5 0 10z" fill="#9da0a2"/></svg>
<svg class="r" style="left:110px;top:884.5px;" width="16" height="16" viewBox="0 0 16 16"><path d="M1 2.5h5.2l1.6 2H15v9H1z" fill="#87939a"/><circle cx="8" cy="9" r="1.9" fill="#3c3f41"/></svg>
<span class="t" style="left:129px;top:883.5px;font-size:13px;line-height:18px;color:#bbbbbb;">interceptor</span>
</div>
<div class="r" style="left:505px;top:109px;width:8px;height:597px;background:rgba(210,210,210,.21);"></div>
<div class="r" style="left:515px;top:108px;width:1394px;height:1px;background:#4d4d4d;"></div>
<div class="r" style="left:684px;top:84px;width:180px;height:22px;background:#4e5254;"></div>
<div class="r" style="left:684px;top:106px;width:180px;height:3px;background:#40a2c8;"></div>
<svg class="r" style="left:523px;top:89px;" width="16" height="16" viewBox="0 0 16 16"><circle cx="8" cy="8" r="7.100" fill="#3e8aab"/><path d="M10.200 9.700a2.600 2.600 0 1 1 0-3.400" fill="none" stroke="#25424f" stroke-width="1.400"/></svg>
<svg class="r" style="left:542px;top:86px;overflow:visible" width="119" height="20"><text x="0" y="15.00" font-family="Liberation Sans, sans-serif" font-size="13" fill="#bbbbbb" textLength="119" lengthAdjust="spacing" xml:space="preserve">AboutController.java</text></svg>
<svg class="r" style="left:667px;top:93px;" width="8" height="8" viewBox="0 0 8 8"><path d="M0.500 0.500l7 7M7.500 0.500l-7 7" stroke="#6e6e6e" stroke-width="1"/></svg>
<svg class="r" style="left:692px;top:89px;" width="16" height="16" viewBox="0 0 16 16"><circle cx="8" cy="8" r="7.100" fill="#3e8aab"/><path d="M10.200 9.700a2.600 2.600 0 1 1 0-3.400" fill="none" stroke="#25424f" stroke-width="1.400"/></svg>
<svg class="r" style="left:711px;top:86px;overflow:visible" width="130" height="20"><text x="0" y="15.00" font-family="Liberation Sans, sans-serif" font-size="13" fill="#bbbbbb" textLength="130" lengthAdjust="spacing" xml:space="preserve">AccountController.java</text></svg>
<svg class="r" style="left:847px;top:93px;" width="8" height="8" viewBox="0 0 8 8"><path d="M0.500 0.500l7 7M7.500 0.500l-7 7" stroke="#6e6e6e" stroke-width="1"/></svg>
<div class="r" style="left:515px;top:109px;width:71px;height:873px;background:#313335;"></div>
<div class="r" style="left:587px;top:109px;width:1322px;height:873px;background:#2b2b2b;"></div>
<div class="r" style="left:586px;top:109px;width:1px;height:873px;background:#555555;"></div>
<div class="r" style="left:587px;top:373px;width:1306px;height:24px;background:#323232;"></div>
<div class="r" style="left:515px;top:373px;width:71px;height:24px;background:#323232;"></div>
<div class="r" style="left:515px;top:109px;width:1394px;height:873px;overflow:hidden;">
<div class="r" style="left:125px;top:672px;width:1px;height:96px;background:#383838;"></div>
<div class="ln" style="top:1px;left:0;width:25px;color:#606366">1</div>
<div class="c" style="left:79px;top:0px;"><span class="k">package </span>com.yuanlrc.base.controller.admin<span class="k">;</span></div>
<div class="ln" style="top:25px;left:0;width:25px;color:#606366">2</div>
<div class="ln" style="top:49px;left:0;width:25px;color:#606366">3</div>
<div class="c" style="left:79px;top:48px;"><span class="k">import </span><span style="background:#3a3a3a;color:#8c8c8c;">...</span></div>
<div class="ln" style="top:73px;left:0;width:25px;color:#606366">20</div>
<div class="ln" style="top:97px;left:0;width:25px;color:#606366">21</div>
<div class="c" style="left:79px;top:96px;"><span class="d">/**</span></div>
<div class="ln" style="top:121px;left:0;width:25px;color:#606366">22</div>
<div class="c" style="left:79px;top:120px;"><span class="d"> * </span><svg width="220" height="24" viewBox="0 0 220 24" style="display:inline-block;vertical-align:top;overflow:visible;fill:#629755"><text transform="translate(0.5 18) skewX(-12)" x="0" y="0" font-family="Liberation Serif, Noto Serif CJK SC, serif" font-size="20" fill="#629755" stroke="none" textLength="220" lengthAdjust="spacing">后台前台用户管理控制器</text></svg></div>
<div class="ln" style="top:145px;left:0;width:25px;color:#606366">23</div>
<div class="c" style="left:79px;top:144px;"><span class="d"> * </span><span class="dt">@author</span><span class="d"> Administrator</span></div>
<div class="ln" style="top:169px;left:0;width:25px;color:#606366">24</div>
<div class="c" style="left:79px;top:168px;"><span class="d"> *</span></div>
<div class="ln" style="top:193px;left:0;width:25px;color:#606366">25</div>
<div class="c" style="left:79px;top:192px;"><span class="d"> */</span></div>
<div class="ln" style="top:217px;left:0;width:25px;color:#606366">26</div>
<div class="c" style="left:79px;top:216px;"><span class="a">@RequestMapping</span>(<span class="s">"/admin/account"</span>)</div>
<div class="ln" style="top:241px;left:0;width:25px;color:#606366">27</div>
<div class="c" style="left:79px;top:240px;"><span class="a">@Controller</span></div>
<div class="ln" style="top:265px;left:0;width:25px;color:#a4a3a3">28</div>
<div class="c" style="left:79px;top:264px;"><span class="k">public class </span><span class="hl">AccountController</span> {</div>
<div class="ln" style="top:289px;left:0;width:25px;color:#606366">29</div>
<div class="ln" style="top:313px;left:0;width:25px;color:#606366">30</div>
<div class="c" style="left:79px;top:312px;">    <span class="a ab">@Autowired</span></div>
<div class="ln" style="top:337px;left:0;width:25px;color:#606366">31</div>
<div class="c" style="left:79px;top:336px;">    <span class="k">private </span>AccountService <span class="f">accountService</span><span class="k">;</span></div>
<div class="ln" style="top:361px;left:0;width:25px;color:#606366">32</div>
<div class="ln" style="top:385px;left:0;width:25px;color:#606366">33</div>
<div class="ln" style="top:409px;left:0;width:25px;color:#606366">34</div>
<div class="c" style="left:79px;top:408px;">    <span class="a ab">@Autowired</span></div>
<div class="ln" style="top:433px;left:0;width:25px;color:#606366">35</div>
<div class="c" style="left:79px;top:432px;">    <span class="k">private </span>OperaterLogService <span class="f">operaterLogService</span><span class="k">;</span></div>
<div class="ln" style="top:457px;left:0;width:25px;color:#606366">36</div>
<div class="c" style="left:79px;top:456px;">    <span class="d">/**</span></div>
<div class="ln" style="top:481px;left:0;width:25px;color:#606366">37</div>
<div class="c" style="left:79px;top:480px;">    <span class="d"> * </span><svg width="140" height="24" viewBox="0 0 140 24" style="display:inline-block;vertical-align:top;overflow:visible;fill:#629755"><text transform="translate(0.5 18) skewX(-12)" x="0" y="0" font-family="Liberation Serif, Noto Serif CJK SC, serif" font-size="20" fill="#629755" stroke="none" textLength="140" lengthAdjust="spacing">用户名列表页面</text></svg></div>
<div class="ln" style="top:505px;left:0;width:25px;color:#606366">38</div>
<div class="c" style="left:79px;top:504px;">    <span class="d"> * </span><span class="dt">@param</span><span class="d"> </span><span class="dp">model</span></div>
<div class="ln" style="top:529px;left:0;width:25px;color:#606366">39</div>
<div class="c" style="left:79px;top:528px;">    <span class="d"> * </span><span class="dt">@param</span><span class="d"> </span><span class="dp">account</span></div>
<div class="ln" style="top:553px;left:0;width:25px;color:#606366">40</div>
<div class="c" style="left:79px;top:552px;">    <span class="d"> * </span><span class="dt">@param</span><span class="d"> </span><span class="dp">pageBean</span></div>
<div class="ln" style="top:577px;left:0;width:25px;color:#606366">41</div>
<div class="c" style="left:79px;top:576px;">    <span class="d"> * </span><span class="dt" style="background:#52503a">@return</span></div>
<div class="ln" style="top:601px;left:0;width:25px;color:#606366">42</div>
<div class="c" style="left:79px;top:600px;">    <span class="d"> */</span></div>
<div class="ln" style="top:625px;left:0;width:25px;color:#606366">43</div>
<div class="c" style="left:79px;top:624px;">    <span class="a">@RequestMapping</span>(value=<span class="s">"/list"</span>)</div>
<div class="ln" style="top:649px;left:0;width:25px;color:#606366">44</div>
<div class="c" style="left:79px;top:648px;">    <span class="k">public </span>String <span class="m">list</span>(Model model<span class="k">, </span>Account account<span class="k">, </span>PageBean&lt;Account&gt; pageBean){</div>
<div class="ln" style="top:673px;left:0;width:25px;color:#606366">45</div>
<div class="c" style="left:79px;top:672px;">        model.addAttribute(<span class="h" style="width:24px;margin-left:2px;margin-right:3px;">s:</span><span class="s">"title"</span><span class="k">, </span><span class="h" style="width:27px;margin-left:1px;margin-right:3px;">o:</span><span class="s">"</span><svg width="100" height="24" viewBox="0 0 100 24" style="display:inline-block;vertical-align:top;overflow:visible;fill:#6a8759"><text x="0.5" y="18" font-family="Liberation Serif, Noto Serif CJK SC, serif" font-size="20" fill="#6a8759" stroke="none" textLength="100" lengthAdjust="spacing">用户名列表</text></svg><span class="s">"</span>)<span class="k">;</span></div>
<div class="ln" style="top:697px;left:0;width:25px;color:#606366">46</div>
<div class="c" style="left:79px;top:696px;">        model.addAttribute(<span class="h" style="width:24px;margin-left:2px;margin-right:3px;">s:</span><span class="s">"name"</span><span class="k">, </span>account.getName())<span class="k">;</span></div>
<div class="ln" style="top:721px;left:0;width:25px;color:#606366">47</div>
<div class="c" style="left:79px;top:720px;">        model.addAttribute(<span class="h" style="width:24px;margin-left:2px;margin-right:3px;">s:</span><span class="s">"pageBean"</span><span class="k">, </span><span class="f">accountService</span>.findList(account<span class="k">, </span>pageBean))<span class="k">;</span></div>
<div class="ln" style="top:745px;left:0;width:25px;color:#606366">48</div>
<div class="c" style="left:79px;top:744px;">        <span class="k">return </span><span class="s">"admin/account/list"</span><span class="k">;</span></div>
<div class="ln" style="top:769px;left:0;width:25px;color:#606366">49</div>
<div class="c" style="left:79px;top:768px;">    }</div>
<div class="ln" style="top:793px;left:0;width:25px;color:#606366">50</div>
<div class="ln" style="top:817px;left:0;width:25px;color:#606366">51</div>
<div class="c" style="left:79px;top:816px;">    <span class="d">/**</span></div>
<div class="ln" style="top:841px;left:0;width:25px;color:#606366">52</div>
<div class="c" style="left:79px;top:840px;">    <span class="d"> * </span><svg width="260" height="24" viewBox="0 0 260 24" style="display:inline-block;vertical-align:top;overflow:visible;fill:#629755"><text transform="translate(0.5 18) skewX(-12)" x="0" y="0" font-family="Liberation Serif, Noto Serif CJK SC, serif" font-size="20" fill="#629755" stroke="none" textLength="260" lengthAdjust="spacing">编辑用户名信息表单提交处理</text></svg></div>
<div class="ln" style="top:865px;left:0;width:25px;color:#606366">53</div>
<div class="c" style="left:79px;top:864px;">    <span class="d"> * </span><span class="dt">@param</span><span class="d"> </span><span class="dp">account</span></div>
<svg class="r" style="left:65px;top:54px;" width="13" height="13" viewBox="0 0 13 13"><path d="M0.500 0.500h12v12h-12z" fill="#2b2b2b" stroke="#606366"/><path d="M3.500 6.500h6M6.500 3.500v6" stroke="#606366"/></svg>
<svg class="r" style="left:65px;top:102px;" width="13" height="15" viewBox="0 0 13 15"><path d="M0.500 0.500h12v8.500l-6 5.500-6-5.500z" fill="#2b2b2b" stroke="#606366"/><path d="M3.500 6.500h6" stroke="#606366"/></svg>
<svg class="r" style="left:65px;top:222px;" width="13" height="15" viewBox="0 0 13 15"><path d="M0.500 0.500h12v8.500l-6 5.500-6-5.500z" fill="#2b2b2b" stroke="#606366"/><path d="M3.500 6.500h6" stroke="#606366"/></svg>
<svg class="r" style="left:65px;top:462px;" width="13" height="15" viewBox="0 0 13 15"><path d="M0.500 0.500h12v8.500l-6 5.500-6-5.500z" fill="#2b2b2b" stroke="#606366"/><path d="M3.500 6.500h6" stroke="#606366"/></svg>
<svg class="r" style="left:65px;top:654px;" width="13" height="15" viewBox="0 0 13 15"><path d="M0.500 0.500h12v8.500l-6 5.500-6-5.500z" fill="#2b2b2b" stroke="#606366"/><path d="M3.500 6.500h6" stroke="#606366"/></svg>
<svg class="r" style="left:65px;top:822px;" width="13" height="15" viewBox="0 0 13 15"><path d="M0.500 0.500h12v8.500l-6 5.500-6-5.500z" fill="#2b2b2b" stroke="#606366"/><path d="M3.500 6.500h6" stroke="#606366"/></svg>
<svg class="r" style="left:65px;top:196px;" width="13" height="15" viewBox="0 0 13 15"><path d="M0.500 14.500h12V6l-6-5.500-6 5.500z" fill="#2b2b2b" stroke="#606366"/><path d="M3.500 8.500h6" stroke="#606366"/></svg>
<svg class="r" style="left:65px;top:244px;" width="13" height="15" viewBox="0 0 13 15"><path d="M0.500 14.500h12V6l-6-5.500-6 5.500z" fill="#2b2b2b" stroke="#606366"/><path d="M3.500 8.500h6" stroke="#606366"/></svg>
<svg class="r" style="left:65px;top:604px;" width="13" height="15" viewBox="0 0 13 15"><path d="M0.500 14.500h12V6l-6-5.500-6 5.500z" fill="#2b2b2b" stroke="#606366"/><path d="M3.500 8.500h6" stroke="#606366"/></svg>
<svg class="r" style="left:65px;top:772px;" width="13" height="15" viewBox="0 0 13 15"><path d="M0.500 14.500h12V6l-6-5.500-6 5.500z" fill="#2b2b2b" stroke="#606366"/><path d="M3.500 8.500h6" stroke="#606366"/></svg>
<svg class="r" style="left:32px;top:267px;" width="20" height="20" viewBox="0 0 20 20"><circle cx="9" cy="9" r="7.800" fill="#5ca041"/><path d="M2.500 2.500L11 11" stroke="#323232" stroke-width="1.400"/><circle cx="12.800" cy="12.900" r="6.400" fill="#323232"/><circle cx="12.800" cy="12.900" r="5.400" fill="#3b89a8"/><path d="M14.800 14.300a2.300 2.300 0 1 1 0-2.900" fill="none" stroke="#25424f" stroke-width="1.300"/></svg>
<svg class="r" style="left:32px;top:339px;" width="20" height="20" viewBox="0 0 20 20"><circle cx="9" cy="9" r="7.800" fill="#5ca041"/><path d="M2.500 2.500L11 11" stroke="#313335" stroke-width="1.400"/><path d="M7.200 12.300h4.800V8.800l6.200 4.600-6.200 4.600v-3.400H7.200z" fill="#aeb9c0" stroke="#313335" stroke-width="1.300" paint-order="stroke"/></svg>
<svg class="r" style="left:32px;top:435px;" width="20" height="20" viewBox="0 0 20 20"><circle cx="9" cy="9" r="7.800" fill="#5ca041"/><path d="M2.500 2.500L11 11" stroke="#313335" stroke-width="1.400"/><path d="M7.200 12.300h4.800V8.800l6.200 4.600-6.200 4.600v-3.400H7.200z" fill="#aeb9c0" stroke="#313335" stroke-width="1.300" paint-order="stroke"/></svg>
<svg class="r" style="left:32px;top:651px;" width="20" height="20" viewBox="0 0 20 20"><circle cx="9" cy="9" r="7.800" fill="#5ca041"/><path d="M2.500 2.500L11 11" stroke="#313335" stroke-width="1.400"/><circle cx="12.800" cy="12.900" r="6.400" fill="#313335"/><circle cx="12.800" cy="12.900" r="5.400" fill="#3fa7d1"/><path d="M9.500 15.500q1.500-1.500 2.500 0M14 14.500q1.500-2 2.500-.5M10 10.500q1-.8 2 0" stroke="#3a82a0" stroke-width="1.200" fill="none"/></svg>
</div>
<div class="r" style="left:1896px;top:111px;width:10px;height:10px;background:#be9117;"></div>
<div class="r" style="left:1899px;top:126px;width:8px;height:510px;background:#595b5d;"></div>
<div class="r" style="left:1894px;top:154px;width:14px;height:2px;background:#a88a2a;"></div>
<div class="r" style="left:1894px;top:154px;width:5px;height:2px;background:#be9117;"></div>
<div class="r" style="left:1894px;top:308px;width:14px;height:2px;background:#a88a2a;"></div>
<div class="r" style="left:1894px;top:308px;width:5px;height:2px;background:#be9117;"></div>
<div class="r" style="left:1894px;top:364px;width:14px;height:2px;background:#a88a2a;"></div>
<div class="r" style="left:1894px;top:364px;width:5px;height:2px;background:#be9117;"></div>
<div class="r" style="left:1894px;top:421px;width:14px;height:2px;background:#a88a2a;"></div>
<div class="r" style="left:1894px;top:421px;width:5px;height:2px;background:#be9117;"></div>
<div class="r" style="left:1894px;top:435px;width:14px;height:2px;background:#a88a2a;"></div>
<div class="r" style="left:1894px;top:435px;width:5px;height:2px;background:#be9117;"></div>
<div class="r" style="left:1894px;top:449px;width:14px;height:2px;background:#a88a2a;"></div>
<div class="r" style="left:1894px;top:449px;width:5px;height:2px;background:#be9117;"></div>
<div class="r" style="left:1894px;top:463px;width:14px;height:2px;background:#a88a2a;"></div>
<div class="r" style="left:1894px;top:463px;width:5px;height:2px;background:#be9117;"></div>
<div class="r" style="left:1894px;top:631px;width:14px;height:2px;background:#a88a2a;"></div>
<div class="r" style="left:1894px;top:631px;width:5px;height:2px;background:#be9117;"></div>
<div class="r" style="left:1894px;top:645px;width:14px;height:2px;background:#a88a2a;"></div>
<div class="r" style="left:1894px;top:645px;width:5px;height:2px;background:#be9117;"></div>
<div class="r" style="left:1894px;top:279.5px;width:14px;height:2px;background:#2c6e30;"></div>
<div class="r" style="left:1899px;top:126px;width:8px;height:510px;background:rgba(89,91,93,.6);"></div>
<div class="r" style="left:515px;top:982px;width:1394px;height:24px;background:#313335;"></div>
<div class="r" style="left:515px;top:982px;width:1394px;height:1px;background:#3e4042;"></div>
<svg class="r" style="left:596px;top:984px;overflow:visible" width="104" height="20"><text x="0" y="15.00" font-family="Liberation Sans, sans-serif" font-size="13" fill="#bbbbbb" textLength="104" lengthAdjust="spacing" xml:space="preserve">AccountController</text></svg>
<div class="r" style="left:1908px;top:84px;width:1px;height:923px;background:#4f5153;"></div>
<div class="r" style="left:1909px;top:84px;width:21px;height:923px;background:#3c3f41;"></div>
<svg class="r" style="left:1913px;top:94px;" width="12" height="13" viewBox="0 0 12 13"><ellipse cx="6" cy="3.200" rx="1.600" ry="1.700" fill="#afb1b3"/><ellipse cx="6" cy="8.500" rx="2.300" ry="3.500" fill="#afb1b3"/><path d="M4 5L1 1.500M8 5l3-3.500M4 6.500H0.500M8 6.500h3.500M4 8L1.500 9.500v3M8 8l2.500 1.500v3" stroke="#afb1b3" stroke-width="1" fill="none"/></svg>
<span class="t" style="left:1926px;top:111px;font-size:12px;line-height:16px;height:16px;color:#bbbbbb;letter-spacing:0.108px;transform-origin:0 0;transform:rotate(90deg);">Ant Build</span>
<span class="t" style="left:1913px;top:176.5px;font-size:14.5px;line-height:20px;color:#afb1b3;font-weight:bold;font-style:italic;">m</span>
<span class="t" style="left:1926px;top:194px;font-size:12px;line-height:16px;height:16px;color:#bbbbbb;letter-spacing:0.796px;transform-origin:0 0;transform:rotate(90deg);">Maven</span>
<svg class="r" style="left:1913px;top:254px;" width="12" height="13" viewBox="0 0 12 13"><path d="M1 2.500q0-2 5-2t5 2v8q0 2-5 2t-5-2z" fill="#afb1b3"/><path d="M1 4.500q0 1.800 5 1.800t5-1.800M1 7.300q0 1.800 5 1.800t5-1.800" fill="none" stroke="#3c3f41" stroke-width="1"/></svg>
<span class="t" style="left:1926px;top:272px;font-size:12px;line-height:16px;height:16px;color:#bbbbbb;letter-spacing:-0.546px;transform-origin:0 0;transform:rotate(90deg);">Database</span>
<svg class="r" style="left:1912px;top:341px;" width="14" height="14" viewBox="0 0 14 14"><circle cx="6.500" cy="7" r="5.500" fill="#afb1b3"/><path d="M3.500 11.500L10 2.500" stroke="#3c3f41" stroke-width="1.300"/><path d="M7 9.500l2.200 2.200 4-4.500" stroke="#3c3f41" stroke-width="3" fill="none"/><path d="M7 9.500l2.200 2.200 4-4.500" stroke="#afb1b3" stroke-width="1.400" fill="none"/></svg>
<span class="t" style="left:1926px;top:360px;font-size:12px;line-height:16px;height:16px;color:#bbbbbb;letter-spacing:-0.212px;transform-origin:0 0;transform:rotate(90deg);">Bean Validation</span>
<div class="r" style="left:10px;top:1006px;width:1920px;height:1px;background:#4b4d4f;"></div>
<div class="r" style="left:10px;top:1028px;width:1920px;height:1px;background:#4b4d4f;"></div>
<svg class="r" style="left:44px;top:1013px;" width="11" height="10" viewBox="0 0 11 10"><path d="M0 1h2M3.500 1H11M0 5h2M3.500 5H11M0 9h2M3.500 9H11" stroke="#afb1b3" stroke-width="1.600"/></svg>
<svg class="r" style="left:59px;top:1009px;overflow:visible" width="44" height="18"><text x="0" y="13.00" font-family="Liberation Sans, sans-serif" font-size="12" fill="#bbbbbb" textLength="44" lengthAdjust="spacing" xml:space="preserve"><tspan text-decoration="underline">6</tspan>: TODO</text></svg>
<svg class="r" style="left:124px;top:1012px;" width="14" height="12" viewBox="0 0 14 12"><path d="M0.500 8Q1 2.500 13 0.500q1.500 9-5.500 10-3 .3-4.500-1l-1.500 2z" fill="#afb1b3"/></svg>
<svg class="r" style="left:141px;top:1009px;overflow:visible" width="34" height="18"><text x="0" y="13.00" font-family="Liberation Sans, sans-serif" font-size="12" fill="#bbbbbb" textLength="34" lengthAdjust="spacing" xml:space="preserve">Spring</text></svg>
<svg class="r" style="left:196px;top:1013px;" width="12" height="11" viewBox="0 0 12 11"><rect width="12" height="11" fill="#afb1b3"/><path d="M2 2.500l3 2.500-3 2.500M6 8.500h4" stroke="#3c3f41" stroke-width="1.200" fill="none"/></svg>
<svg class="r" style="left:212px;top:1009px;overflow:visible" width="45" height="18"><text x="0" y="13.00" font-family="Liberation Sans, sans-serif" font-size="12" fill="#bbbbbb" textLength="45" lengthAdjust="spacing" xml:space="preserve">Terminal</text></svg>
<svg class="r" style="left:280px;top:1012px;" width="13" height="13" viewBox="0 0 13 13"><path d="M0.500 0.500h9v3M0.500 0.500v10h3" stroke="#afb1b3" stroke-width="1.400" fill="none"/><rect x="4" y="4" width="9" height="9" fill="#afb1b3"/><path d="M5.500 6.500h2.500M5.500 8.500h2.500M5.500 10.500h2.500M9 6.500h2.500M9 8.500h2.500M9 10.500h2.500" stroke="#3c3f41" stroke-width="1"/></svg>
<svg class="r" style="left:296px;top:1009px;overflow:visible" width="77" height="18"><text x="0" y="13.00" font-family="Liberation Sans, sans-serif" font-size="12" fill="#bbbbbb" textLength="77" lengthAdjust="spacing" xml:space="preserve">Java Enterprise</text></svg>
<div class="r" style="left:1829px;top:1013px;width:12px;height:12px;border-radius:6px;background:#499c54;"></div>
<span class="t" style="left:1832.5px;top:1012px;font-size:9px;line-height:13px;color:#ffffff;font-weight:bold;">1</span>
<svg class="r" style="left:1847px;top:1009px;overflow:visible" width="50" height="18"><text x="0" y="13.00" font-family="Liberation Sans, sans-serif" font-size="12" fill="#bbbbbb" textLength="50" lengthAdjust="spacing" xml:space="preserve">Event Log</text></svg>
<svg class="r" style="left:20px;top:1034px;" width="13" height="13" viewBox="0 0 13 13"><path d="M3.500 0.500h9v9h-9zM3.500 3.500h-3v9h9v-3" stroke="#afb1b3" stroke-width="1" fill="none"/></svg>
<svg class="r" style="left:41px;top:1029px;overflow:visible" width="407" height="20"><text x="0" y="15.00" font-family="Liberation Sans, sans-serif" font-size="13" fill="#bbbbbb" textLength="407" lengthAdjust="spacing" xml:space="preserve">IDE and Plugin Updates: IntelliJ IDEA is ready to update. (today 21:42)</text></svg>
<svg class="r" style="left:1690px;top:1029px;overflow:visible" width="31" height="20"><text x="0" y="15.00" font-family="Liberation Sans, sans-serif" font-size="13" fill="#bbbbbb" textLength="31" lengthAdjust="spacing" xml:space="preserve">28:14</text></svg>
<svg class="r" style="left:1732px;top:1030px;overflow:visible" width="28" height="18"><text x="0" y="13.00" font-family="Liberation Sans, sans-serif" font-size="12" fill="#bbbbbb" textLength="28" lengthAdjust="spacing" xml:space="preserve">CRLF</text></svg>
<svg class="r" style="left:1781.5px;top:1030px;overflow:visible" width="33" height="18"><text x="0" y="13.00" font-family="Liberation Sans, sans-serif" font-size="12.25" fill="#bbbbbb" textLength="33" lengthAdjust="spacing" xml:space="preserve">UTF-8</text></svg>
<svg class="r" style="left:1837.5px;top:1029px;overflow:visible" width="25" height="20"><text x="0" y="15.00" font-family="Liberation Sans, sans-serif" font-size="13" fill="#bbbbbb" textLength="25" lengthAdjust="spacing" xml:space="preserve">Tab*</text></svg>
<svg class="r" style="left:1764.5px;top:1035px;" width="6" height="10" viewBox="0 0 6 10"><path d="M0 4l3-3.500L6 4zM0 6l3 3.500L6 6z" fill="#8a8d8f"/></svg>
<svg class="r" style="left:1819px;top:1035px;" width="6" height="10" viewBox="0 0 6 10"><path d="M0 4l3-3.500L6 4zM0 6l3 3.500L6 6z" fill="#8a8d8f"/></svg>
<svg class="r" style="left:1867px;top:1035px;" width="6" height="10" viewBox="0 0 6 10"><path d="M0 4l3-3.500L6 4zM0 6l3 3.500L6 6z" fill="#8a8d8f"/></svg>
<svg class="r" style="left:1885px;top:1033px;" width="12" height="13" viewBox="0 0 12 13"><path d="M1.500 6V3.500a2.500 2.500 0 0 1 5 0V4" stroke="#afb1b3" stroke-width="1.400" fill="none"/><rect x="3.500" y="6" width="8" height="6.500" fill="#afb1b3"/></svg>
<svg class="r" style="left:1909px;top:1032px;" width="14" height="16" viewBox="0 0 14 16"><path d="M3 5.500V3.500q0-3 4-3t4 3v2M1 6h12M3.500 6.500v3q0 2.500 3.500 2.500t3.500-2.500v-3M3 15.500q0-3 4-3t4 3zM5 10.500q2-1.500 4 0" stroke="#8a8d8f" stroke-width="1" fill="none"/><circle cx="5.300" cy="8" r=".8" fill="#8a8d8f"/><circle cx="8.700" cy="8" r=".8" fill="#8a8d8f"/></svg>
<svg class="r" style="left:1757.9px;top:857.8px;" width="160" height="160" viewBox="-80 -80 160 160"><defs><filter id="gr" x="-5%" y="-5%" width="110%" height="110%"><feTurbulence type="fractalNoise" baseFrequency="0.8" numOctaves="2" seed="7" result="n"/><feColorMatrix in="n" type="matrix" values="0 0 0 0 0 0 0 0 0 0 0 0 0 0 0 0 0 0 -3.500 3.150" result="m"/><feComposite in="SourceGraphic" in2="m" operator="in"/></filter></defs><g transform="rotate(17)" opacity=".93" filter="url(#gr)"><circle cx="0" cy="0" r="72.200" fill="none" stroke="#d01515" stroke-width="1.400"/><circle cx="0" cy="0" r="65.400" fill="none" stroke="#d01515" stroke-width="4"/><g transform="translate(1 -39)"><path d="M-7.800 -1.500q0-6.500 7.800-6.500t7.800 6.500q0 9.500-7.800 9.500t-7.800-9.500z" fill="none" stroke="#d01515" stroke-width="3.200"/><path d="M0 -8q0-3 2.500-5" stroke="#d01515" stroke-width="2" fill="none"/><circle cx="3" cy="-11.500" r="1.600" fill="#d01515"/><path d="M-4 -2.200h2.600M1.400 -2.200h2.600" stroke="#d01515" stroke-width="1.500"/></g><text x="1" y="-18.500" text-anchor="middle" font-family="Liberation Sans, sans-serif" font-size="11" font-weight="bold" fill="#d01515" textLength="83" lengthAdjust="spacingAndGlyphs">www.yuanlrc.com</text><text x="-57" y="14.5" font-family="Liberation Serif, Noto Serif CJK SC, serif" font-size="28" font-weight="bold" fill="#d01515" textLength="112" lengthAdjust="spacing">猿来入此</text><text x="-17" y="47.5" font-family="Liberation Serif, Noto Serif CJK SC, serif" font-size="21" font-weight="bold" fill="#d01515" textLength="42" lengthAdjust="spacing">出品</text></g></svg>
<svg class="r" style="left:1765.5px;top:1014.5px;overflow:visible" width="154" height="24" viewBox="0 0 154 24"><g fill="#e8251f"><text x="8" y="17.5" font-family="Liberation Serif, Noto Serif CJK SC, serif" font-size="21.5" font-weight="bold" fill="#e8251f" textLength="129.5" lengthAdjust="spacing">倒卖侵权必究</text><text x="7" y="17" text-anchor="end" font-family="Liberation Serif, Noto Serif CJK SC, serif" font-size="18" font-weight="bold" fill="#e8251f">【</text><text x="141" y="17" font-family="Liberation Serif, Noto Serif CJK SC, serif" font-size="18" font-weight="bold" fill="#e8251f">】</text></g></svg>
</body></html>
